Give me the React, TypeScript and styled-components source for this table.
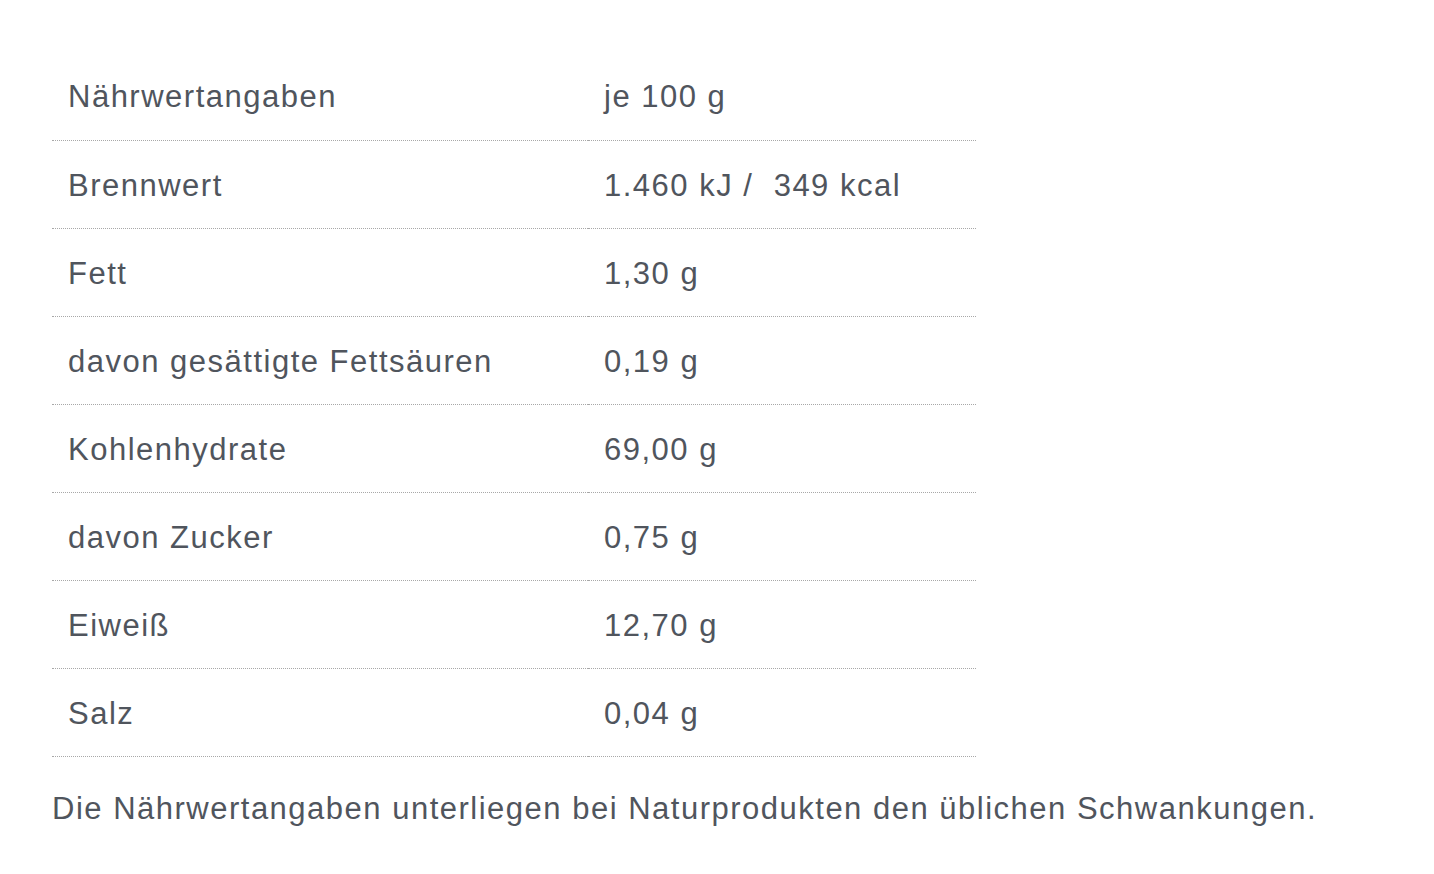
import React from 'react';
import styled, { createGlobalStyle } from 'styled-components';

interface IRow {
  name: string;
  value: string;
}

const GlobalStyle = createGlobalStyle`
  html, body {
    margin: 0;
    padding: 0;
    background: #fff;
  }
  body {
    font-family: "Liberation Sans", Arial, sans-serif;
    color: #50555d;
  }
`;

const rows: IRow[] = [
  { name: 'Nährwertangaben', value: 'je 100 g' },
  { name: 'Brennwert', value: '1.460 kJ /  349 kcal' },
  { name: 'Fett', value: '1,30 g' },
  { name: 'davon gesättigte Fettsäuren', value: '0,19 g' },
  { name: 'Kohlenhydrate', value: '69,00 g' },
  { name: 'davon Zucker', value: '0,75 g' },
  { name: 'Eiweiß', value: '12,70 g' },
  { name: 'Salz', value: '0,04 g' },
];

const App = () => {
  return (
    <Wrapper>
      <GlobalStyle />
      <Table>
        <tbody>
          {rows.map((row) => (
            <Row key={row.name}>
              <NameCell>{row.name}</NameCell>
              <ValueCell>{row.value}</ValueCell>
            </Row>
          ))}
        </tbody>
      </Table>
      <Note>
        Die Nährwertangaben unterliegen bei Naturprodukten den üblichen
        Schwankungen.
      </Note>
    </Wrapper>
  );
};

const Wrapper = styled.div`
  padding: 52px 52px 0;
`;

const Table = styled.table`
  width: 924px;
  border-collapse: collapse;
  table-layout: fixed;
`;

const Row = styled.tr`
  height: 88px;
  border-bottom: 1px dotted #a8a8a8;
`;

const NameCell = styled.td`
  width: 536px;
  padding: 3px 16px 0;
  box-sizing: border-box;
  font-size: 31px;
  letter-spacing: 1.5px;
  white-space: pre;
`;

const ValueCell = styled(NameCell)`
  width: 388px;
`;

const Note = styled.p`
  margin: 34px 0 0;
  font-size: 31px;
  letter-spacing: 1.5px;
  line-height: 36px;
  white-space: nowrap;
`;

export default App;
